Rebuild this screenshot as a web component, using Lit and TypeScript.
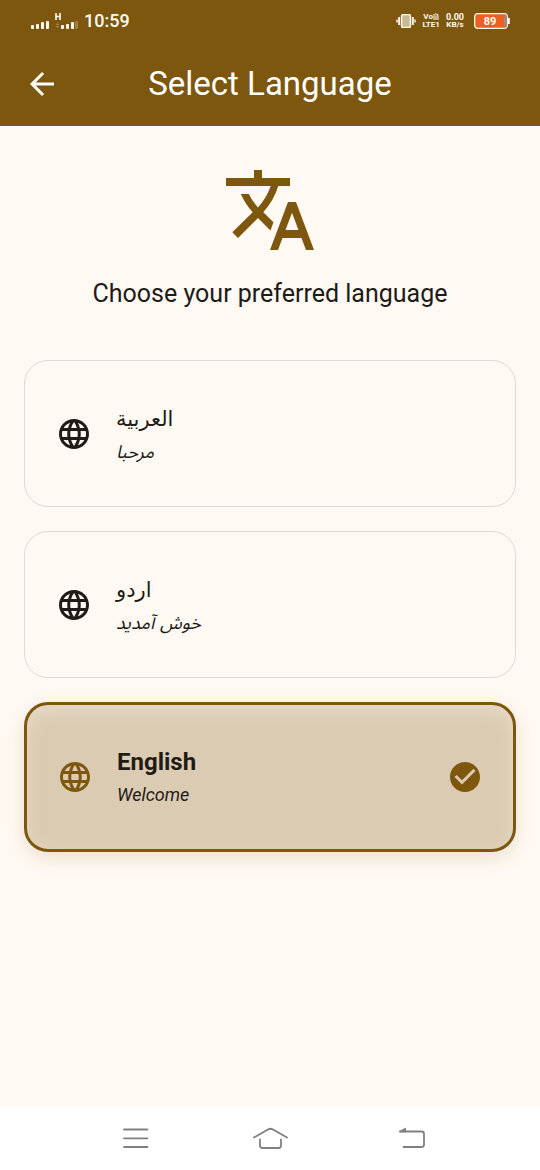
import { LitElement, html, svg, css, nothing } from "lit";
import { customElement, property, state } from "lit/decorators.js";

interface Language {
  code: string;
  name: string;
  greeting: string;
}

const LANGUAGES: Language[] = [
  { code: "ar", name: "العربية", greeting: "مرحبا" },
  { code: "ur", name: "اردو", greeting: "خوش آمدید" },
  { code: "en", name: "English", greeting: "Welcome" },
];

const paths = {
  back: "M20 11H7.83l5.59-5.59L12 4l-8 8 8 8 1.41-1.41L7.83 13H20v-2z",
  translate:
    "M12.87 15.07l-2.54-2.51.03-.03c1.74-1.94 2.98-4.17 3.71-6.53H17V4h-7V2H8v2H1v1.99h11.17C11.5 7.92 10.44 9.75 9 11.35 8.07 10.32 7.3 9.19 6.69 8h-2c.73 1.63 1.73 3.17 2.98 4.56l-5.09 5.02L4 19l5-5 3.11 3.11.76-2.04zM18.5 10h-2L12 22h2l1.12-3h4.75L21 22h2l-4.5-12zm-2.62 7l1.62-4.33L19.12 17h-3.24z",
  globe:
    "M11.99 2C6.47 2 2 6.48 2 12s4.47 10 9.99 10C17.52 22 22 17.52 22 12S17.52 2 11.99 2zm6.93 6h-2.95c-.32-1.25-.78-2.45-1.38-3.56 1.84.63 3.37 1.91 4.33 3.56zM12 4.04c.83 1.2 1.48 2.53 1.91 3.96h-3.82c.43-1.43 1.08-2.76 1.91-3.96zM4.26 14C4.1 13.36 4 12.69 4 12s.1-1.36.26-2h3.38c-.08.66-.14 1.32-.14 2s.06 1.34.14 2H4.26zm.82 2h2.95c.32 1.25.78 2.45 1.38 3.56-1.84-.63-3.37-1.9-4.33-3.56zm2.95-8H5.08c.96-1.66 2.49-2.93 4.33-3.56C8.81 5.55 8.35 6.75 8.03 8zM12 19.96c-.83-1.2-1.48-2.53-1.91-3.96h3.82c-.43 1.43-1.08 2.76-1.91 3.96zM14.34 14H9.66c-.09-.66-.16-1.32-.16-2s.07-1.35.16-2h4.68c.09.65.16 1.32.16 2s-.07 1.34-.16 2zm.25 5.56c.6-1.11 1.06-2.31 1.38-3.56h2.95c-.96 1.65-2.49 2.93-4.33 3.56zM16.36 14c.08-.66.14-1.32.14-2s-.06-1.34-.14-2h3.38c.16.64.26 1.31.26 2s-.1 1.36-.26 2h-3.38z",
  check:
    "M12 2C6.48 2 2 6.48 2 12s4.48 10 10 10 10-4.48 10-10S17.52 2 12 2zm-2 15l-5-5 1.41-1.41L10 14.17l7.59-7.59L19 8l-9 9z",
};

const icon = (d: string) =>
  html`<svg viewBox="0 0 24 24" fill="currentColor" aria-hidden="true"><path d=${d} /></svg>`;

@customElement("status-bar")
class StatusBar extends LitElement {
  static styles = css`
    :host {
      display: flex;
      align-items: center;
      justify-content: space-between;
      height: 42px;
      padding: 0 30px;
      color: #fffaf0;
    }
    .group {
      display: flex;
      align-items: center;
    }
    .left,
    .right { gap: 6px; }
    .clock { font-size: 18px; line-height: 20px; font-weight: 500; }
    .tiny {
      display: flex;
      flex-direction: column;
      align-items: center;
      font-size: 8px;
      line-height: 8px;
      font-weight: 700;
    }
    .row { display: flex; align-items: center; }
    .rate { font-size: 9px; }
    .net { margin-right: 4px; }
    svg { display: block; }
  `;

  render() {
    const bar = (x: number, h: number, o = 1) =>
      svg`<rect x=${x} y=${18 - h} width="3" height=${h} rx="1" opacity=${o} />`;
    return html`
      <div class="group left">
        <svg width="48" height="20" viewBox="0 0 48 20" fill="currentColor" role="img" aria-label="Signal">
          ${bar(1, 4)}${bar(6, 5)}${bar(11, 7)}${bar(16, 8)}
          <path d="M26 2v7M30 2v7M26 5.5h4" stroke="currentColor" stroke-width="1.6" fill="none" />
          <path d="M25.5 14l2-2 2 2zM25.5 15l2 2 2-2z" opacity=".3" />
          ${bar(31, 4)}${bar(36, 5)}${bar(41, 7)}${bar(45, 8, 0.25)}
        </svg>
        <span class="clock">10:59</span>
      </div>
      <div class="group right">
        <svg width="20" height="16" viewBox="0 0 20 16" fill="none" stroke="currentColor" role="img" aria-label="Vibrate">
          <rect x="5.6" y="1.6" width="8.8" height="12.8" rx="1" fill="#fffaf0" fill-opacity=".6" stroke-width="1.4" />
          <path d="M3.2 4v8M16.8 4v8" stroke-width="2" />
          <path d="M1 6.5v3M19 6.5v3" stroke-width="1.4" />
        </svg>
        <span class="tiny">
          <span class="row">Vo<svg width="6" height="8" viewBox="0 0 6 8" fill="none" stroke="currentColor" stroke-width="1.1" aria-hidden="true"><path d="M1 1v6M3 2.5v4.5M2 1q3-.5 3 2.5v3.5" /></svg></span>
          <span>LTE1</span>
        </span>
        <span class="tiny net"><span class="rate">0.00</span><span>KB/s</span></span>
        <svg width="36" height="16" viewBox="0 0 36 16" role="img" aria-label="Battery 89">
          <rect x=".7" y=".7" width="32.6" height="14.6" rx="3" fill="#eb5f22" stroke="#fffaf0" stroke-width="1.3" />
          <path d="M30 1.4h1.5a1.5 1.5 0 0 1 1.5 1.5v10.2a1.5 1.5 0 0 1-1.5 1.5H30z" fill="#a08878" />
          <path d="M34.8 5v6" stroke="#fffaf0" stroke-width="2" />
          <text x="16" y="12" text-anchor="middle" fill="#fff" font-size="11" font-weight="700">89</text>
        </svg>
      </div>
    `;
  }
}

@customElement("language-card")
class LanguageCard extends LitElement {
  @property({ attribute: false }) language!: Language;
  @property({ type: Boolean, reflect: true }) selected = false;

  static styles = css`
    :host { display: block; }
    .card {
      position: relative;
      display: flex;
      align-items: center;
      gap: 24px;
      padding: 39px 31px 38px;
      border: 1px solid #dedad4;
      border-radius: 24px;
      color: #1f1b16;
      cursor: pointer;
    }
    .card:not(.selected) { padding-block: 40px 39px; }
    .card.selected {
      padding: 39px 30px;
      border: 3px solid #7c570d;
      background: #dbcbb2;
      box-shadow:
        0 6px 18px rgba(150, 85, 30, 0.15),
        inset 0 6px 18px rgba(255, 248, 242, 0.35);
    }
    .radio {
      position: absolute;
      inset: 0;
      margin: 0;
      opacity: 0;
      cursor: pointer;
    }
    .icon { flex: none; width: 36px; height: 36px; }
    .icon svg { display: block; width: 100%; height: 100%; }
    .selected .icon { color: #7c570d; }
    .words { flex: 1; display: flex; flex-direction: column; align-items: flex-start; }
    .name { font-size: 24px; line-height: 36px; }
    .selected .name { font-weight: 700; }
    .greeting { font-size: 18px; line-height: 30px; font-style: italic; }
    .arabic { font-family: "DejaVu Sans", "Noto Sans Arabic", sans-serif; }
    .arabic .name { font-size: 21px; }
  `;

  private pick() {
    this.dispatchEvent(
      new CustomEvent("pick", { detail: this.language.code, bubbles: true, composed: true })
    );
  }

  render() {
    const { code, name, greeting } = this.language;
    return html`
      <label class="card ${this.selected ? "selected" : ""}">
        <input class="radio" type="radio" name="language" value=${code} .checked=${this.selected} @change=${this.pick} />
        <span class="icon">${icon(paths.globe)}</span>
        <span class="words ${code === "en" ? "" : "arabic"}" lang=${code}>
          <span class="name">${name}</span>
          <span class="greeting">${greeting}</span>
        </span>
        ${this.selected ? html`<span class="icon">${icon(paths.check)}</span>` : nothing}
      </label>
    `;
  }
}

@customElement("system-nav")
class SystemNav extends LitElement {
  static styles = css`
    :host {
      display: flex;
      justify-content: center;
      align-items: center;
      gap: 90px;
      height: 64px;
      background: #fff;
    }
    .key {
      display: flex;
      padding: 0;
      border: 0;
      background: none;
      color: #808080;
    }
    svg {
      display: block;
      width: 48px;
      height: 28px;
      fill: none;
      stroke: currentColor;
      stroke-width: 1.8;
      stroke-linecap: round;
      stroke-linejoin: round;
    }
  `;

  render() {
    return html`
      <button class="key" aria-label="Recent apps">
        <svg viewBox="0 0 48 28"><path d="M16 5.5h23.5M16 14.3h23.5M16 23h23.5" /></svg>
      </button>
      <button class="key" aria-label="Home">
        <svg viewBox="0 0 48 28"><path d="M8 13.500L22 5.500q2.500-1.500 5 0l14 8M14 15.500v6q0 2.500 2.500 2.500h16q2.500 0 2.500-2.500v-6" /></svg>
      </button>
      <button class="key" aria-label="Back">
        <svg viewBox="0 0 48 28"><path d="M16 7.500h21.500q2.500 0 2.500 2.500v10.500q0 2.500-2.500 2.500H19.500" /><path d="M15.500 7.500l6-3.300v3.300z" fill="currentColor" stroke-width="1" /></svg>
      </button>
    `;
  }
}

@customElement("app-root")
class AppRoot extends LitElement {
  @state() private current = "en";

  static styles = css`
    :host {
      display: flex;
      flex-direction: column;
      min-height: 100vh;
      background: #fef9f2;
      color: #1f1b16;
      font-family: Roboto, "Noto Sans", sans-serif;
    }
    .top { background: #7c570d; color: #fff; }
    .bar {
      display: grid;
      grid-template-columns: 36px 1fr 36px;
      align-items: center;
      height: 84px;
      padding: 0 24px;
    }
    .back {
      display: flex;
      width: 36px;
      height: 36px;
      padding: 0;
      border: 0;
      background: none;
      color: inherit;
      cursor: pointer;
    }
    .back svg { width: 36px; height: 36px; }
    .title { margin: 0; text-align: center; font-size: 33px; line-height: 42px; font-weight: 400; }
    .body {
      flex: 1;
      display: flex;
      flex-direction: column;
      padding: 36px 24px 24px;
    }
    .hero { align-self: center; width: 96px; height: 96px; color: #7c570d; }
    .hero svg { display: block; }
    .prompt { margin: 18px 0 48px; text-align: center; font-size: 25px; line-height: 36px; font-weight: 400; }
    .list { display: flex; flex-direction: column; gap: 24px; }
  `;

  render() {
    return html`
      <header class="top">
        <status-bar></status-bar>
        <div class="bar">
          <button class="back" aria-label="Back">${icon(paths.back)}</button>
          <h1 class="title">Select Language</h1>
        </div>
      </header>
      <main class="body">
        <div class="hero">${icon(paths.translate)}</div>
        <h2 class="prompt">Choose your preferred language</h2>
        <div class="list" role="radiogroup" aria-label="Choose your preferred language"
          @pick=${(e: CustomEvent<string>) => (this.current = e.detail)}>
          ${LANGUAGES.map(
            (l) => html`<language-card .language=${l} ?selected=${l.code === this.current}></language-card>`
          )}
        </div>
      </main>
      <system-nav></system-nav>
    `;
  }
}
